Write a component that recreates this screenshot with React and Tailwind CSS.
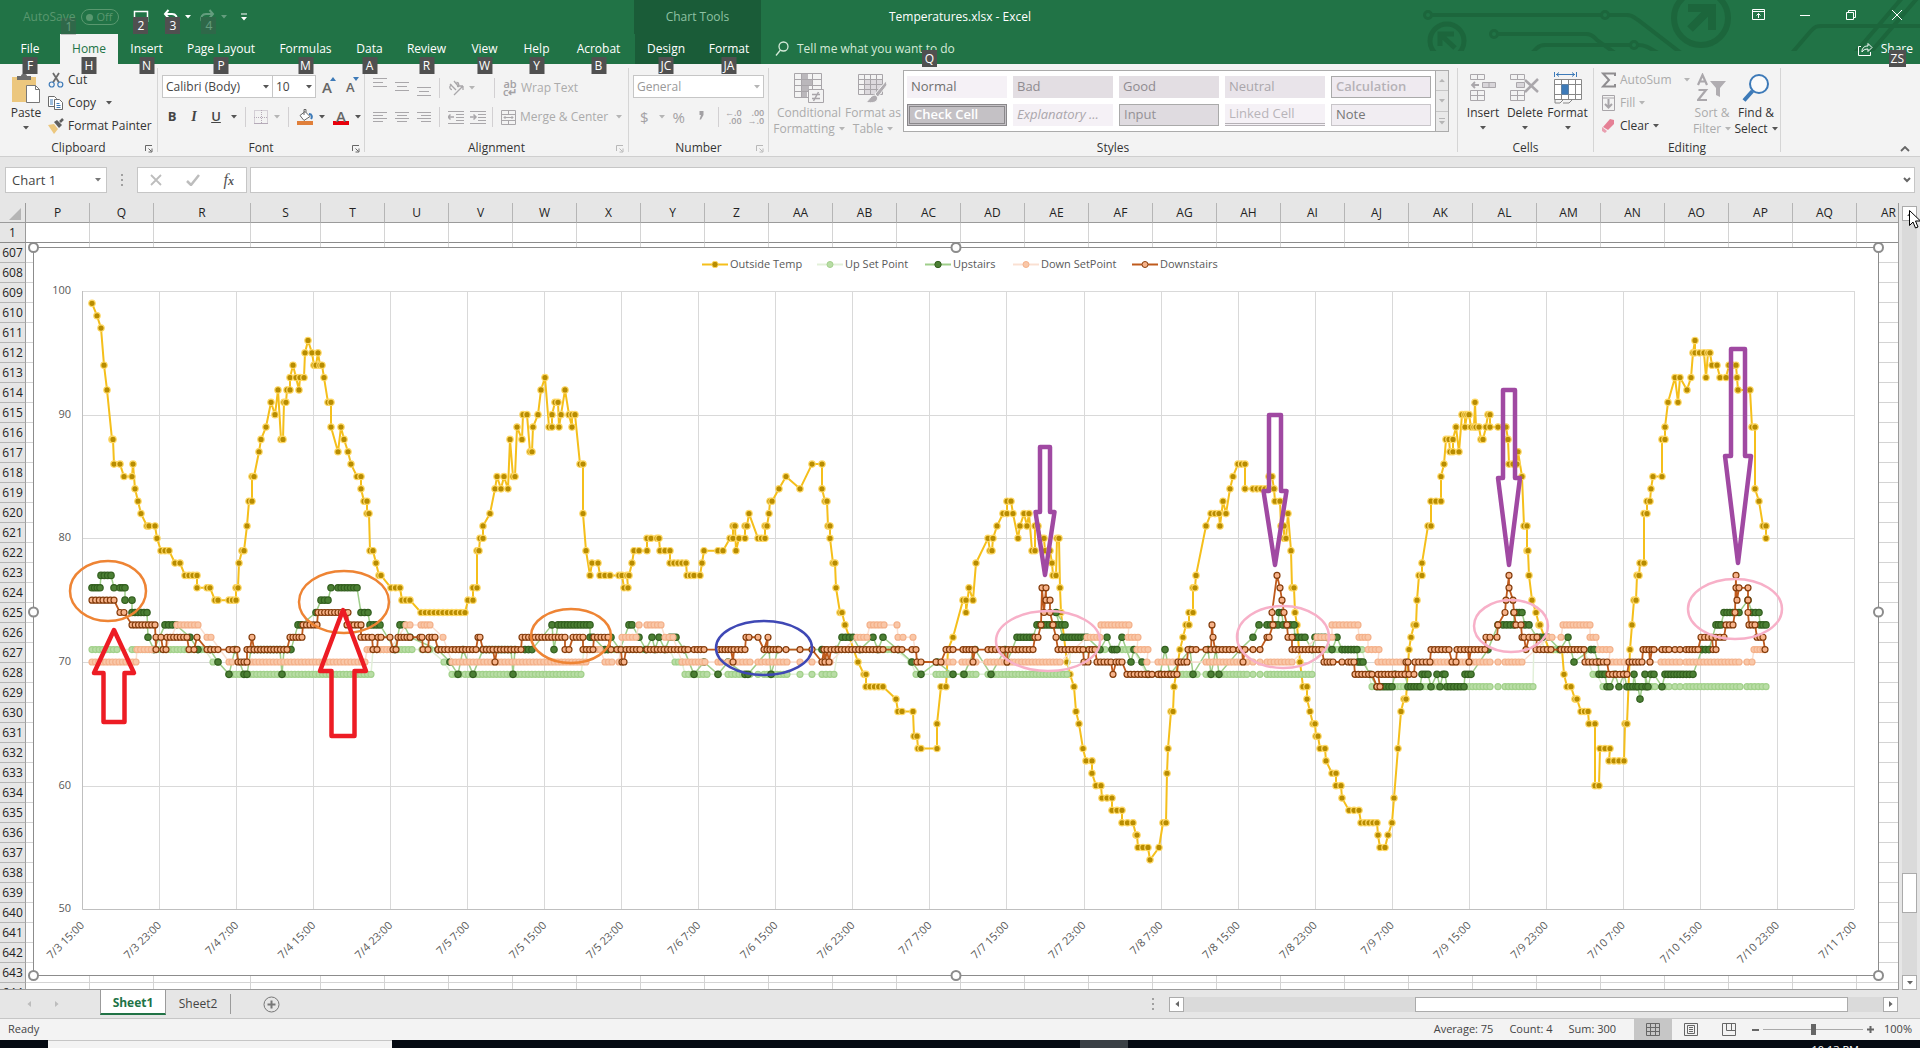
import React, { useState } from 'react';
import clsx from 'clsx';

/* ---------- data ---------- */

const TABS = [
  { name: 'File', tip: 'F', width: 'w-[60px]' },
  { name: 'Home', tip: 'H', width: 'w-[58px]' },
  { name: 'Insert', tip: 'N', width: 'w-[57px]' },
  { name: 'Page Layout', tip: 'P', width: 'w-[92px]' },
  { name: 'Formulas', tip: 'M', width: 'w-[77px]' },
  { name: 'Data', tip: 'A', width: 'w-[51px]' },
  { name: 'Review', tip: 'R', width: 'w-[63px]' },
  { name: 'View', tip: 'W', width: 'w-[53px]' },
  { name: 'Help', tip: 'Y', width: 'w-[51px]' },
  { name: 'Acrobat', tip: 'B', width: 'w-[73px]' },
];

const CHART_TABS = [
  { name: 'Design', tip: 'JC', width: 'w-[62px]' },
  { name: 'Format', tip: 'JA', width: 'w-[64px]' },
];

const CELL_STYLES = [
  { name: 'Normal', look: 'bg-[#f5f1f6] text-[#6f6f6f]' },
  { name: 'Bad', look: 'bg-[#e3dee3] text-[#8f8b90]' },
  { name: 'Good', look: 'bg-[#e3dee3] text-[#8f8b90]' },
  { name: 'Neutral', look: 'bg-[#e9e4ea] text-[#aaa6ab]' },
  { name: 'Calculation', look: 'bg-[#efeaf0] text-[#b5b1b6] font-semibold border border-[#aaa]' },
  { name: 'Check Cell', look: 'bg-[#c4c1c5] text-white font-semibold border-3 border-double border-[#8a888b]' },
  { name: 'Explanatory ...', look: 'bg-[#f5f1f6] text-[#aaa6ab] italic' },
  { name: 'Input', look: 'bg-[#dfdbe0] text-[#949195] border border-[#aaa]' },
  { name: 'Linked Cell', look: 'bg-[#f5f1f6] text-[#b8b4b9] border-b-3 border-double border-[#b5b1b6]' },
  { name: 'Note', look: 'bg-[#f1edf2] text-[#777] border border-[#c8c5c9]' },
];

const COLUMNS = 'P Q R S T U V W X Y Z AA AB AC AD AE AF AG AH AI AJ AK AL AM AN AO AP AQ AR'.split(' ');
const ROWS = [1, ...Array.from({ length: 38 }, (_, i) => 607 + i)];

// Readings are written "temp@x" or "temp@x1-x2" for a run of equal readings.
const SERIES = [
  {
    name: 'Outside Temp', line: '#f5bf1b', fill: '#b88c00', ring: '#ffd966', r: 3.2, gap: 4.5, width: 2,
    data: '99@92 98@97 97@101 94@104 92@107 88@112-113 86@114 86@120 85@124 85@132 86@133 84@135 83@138 82@141 81@147-149 81@155 80@157 79@161-169 78@175-180 77@185-197 76@197 76@207-210 75@215-218 75@229-236 76@236-238 78@239 79@242-244 81@247 83@249-252 85@252-254 87@259 88@261 89@266 91@271 90@275 92@278 88@281-283 91@284-286 92@287-290 93@290 94@293 93@296 92@299 93@300-304 95@305 96@308 95@312 94@314-316 95@318 94@320-322 93@324 91@328-331 89@331 87@338 89@341 88@344 87@348 86@351 85@357-361 84@361 83@364-367 82@367-369 79@370-373 78@376 77@379-381 76@391-400 75@402-410 74@421-465 75@468-473 76@473-477 79@477-479 80@480-483 81@483 82@490 84@495 85@497 84@501 85@504 84@508 88@510 85@513-515 89@517 88@522 90@523-527 87@530-532 89@533 90@538 92@541 93@545 89@549-552 90@552 91@555-558 89@559 90@561 92@565 90@569 89@572 90@572-575 86@580-583 82@583 79@586 77@590 78@592-598 77@600-610 77@619-622 76@624-628 77@627-629 78@632 79@634-639 79@647 80@647-651 80@657-659 79@660-670 78@670-686 77@687-694 77@700 78@702 79@704 79@718-723 80@730-733 81@733-735 79@736 80@739-745 81@745-747 82@749 80@758-765 81@765-767 82@769 83@770-772 84@779 85@786 84@800 86@812 86@822 84@822 83@825-827 81@828-830 80@830 78@833-835 76@836 74@840-842 73@845 70@858 69@864-866 68@866-883 67@896 66@898-902 66@913 64@914-917 63@918-921 63@937 65@937 68@941-946 71@948 72@953 75@963-966 74@966 76@969 75@973 78@976 80@988 79@990-992 80@993 81@997 82@1003-1007 83@1007-1011 82@1013 80@1018 81@1020 82@1024 81@1027 82@1029 79@1032-1035 81@1035-1038 80@1041-1044 79@1045-1050 78@1052 77@1053-1056 80@1057-1059 76@1060 74@1061 70@1067 69@1070 68@1074 66@1076 65@1079 63@1083 62@1086-1092 61@1092 60@1096-1101 59@1102-1112 58@1112-1122 57@1122-1133 56@1136-1137 55@1138-1148 54@1150 55@1159 57@1163-1166 61@1167 63@1168 66@1171-1173 68@1174 71@1180 72@1183 73@1186-1189 74@1189-1193 76@1193-1195 77@1196 81@1206 82@1211-1219 81@1220 83@1223 82@1226 84@1230 85@1233 86@1238-1245 84@1245 84@1253-1269 85@1269-1272 84@1274 83@1275-1280 81@1281-1284 80@1284-1286 82@1288 79@1291 76@1292-1294 74@1295 73@1297 70@1300 68@1303-1307 67@1307 66@1310 65@1313-1315 64@1316-1318 63@1320-1325 62@1326 61@1332-1336 60@1336-1341 59@1342 58@1349-1359 57@1361-1377 56@1378 55@1380-1385 56@1388 57@1392 59@1394 63@1398 66@1401 67@1404-1406 71@1409 72@1411 73@1414-1416 75@1417 77@1419-1422 78@1422 81@1428-1431 83@1431-1441 85@1441 86@1444 88@1446-1449 87@1450-1453 88@1453 89@1456 87@1459 90@1462-1465 89@1465 90@1467-1469 89@1471-1474 91@1475 89@1476-1479 88@1481-1483 89@1486 90@1488-1490 89@1490 89@1498 89@1506 88@1508 86@1509-1517 87@1518 85@1522 81@1524-1527 79@1527-1528 77@1529 75@1532 74@1536 73@1539-1540 71@1549-1562 69@1564 68@1567-1571 67@1575-1577 66@1581-1588 65@1589-1595 60@1595-1599 63@1600-1610 62@1609-1624 65@1625-1627 71@1630 73@1632 75@1634-1636 77@1637-1639 78@1640-1644 82@1644-1647 83@1647-1650 84@1651 85@1653 85@1662 88@1662-1665 89@1665 91@1668 93@1675 91@1678 93@1680 92@1687 93@1691 95@1693 96@1695 95@1695-1704 93@1706 95@1708-1710 94@1712-1717 93@1720-1726 94@1729-1736 93@1737 92@1738 92@1750 89@1752-1755 84@1755 83@1759 81@1763-1766 80@1766',
  },
  {
    name: 'Up Set Point', line: '#e2f0d9', fill: '#b9dda6', ring: '#a2d18b', r: 3, gap: 3.5, width: 1.5,
    data: '71@92-117 71@132-205 70@213-218 69@229-371 71@373-412 71@422-430 70@444 69@452-460 69@465-581 71@584-670 70@675-682 69@685-707 69@718 69@728-750 69@758 69@764-787 69@800 69@812 69@822-834 71@838-895 70@911 69@916 69@936-953 69@963-976 69@988-1067 71@1071-1105 71@1122-1133 69@1147 69@1158-1197 69@1206-1247 69@1253 69@1260 69@1267-1312 71@1314-1362 68@1372 68@1384-1407 68@1420-1490 68@1498 68@1505-1533 72@1534-1540 71@1545-1584 69@1593-1597 68@1603 68@1627-1655 68@1662-1669 68@1675-1680 68@1686-1740 68@1747-1766',
  },
  {
    name: 'Upstairs', line: '#9fce8a', fill: '#4b7f34', ring: '#335f1f', r: 3.2, gap: 3.2, width: 1.5,
    data: '76@92-100 77@101-111 76@114 76@120-125 75@125 75@132 74@132-147 72@148 71@154 73@165-176 72@190 71@198 71@210 70@218 69@229 71@235 69@244-247 71@251-280 69@282 71@284-291 73@298-301 74@316 75@321-328 76@331 76@338-357 74@361-368 73@370-380 71@395 73@400-404 72@410 71@438 70@450 69@458 71@463 69@473 71@483-511 69@513 71@515 71@525-532 73@552 71@554 73@558-590 72@590-593 71@605-608 72@611 71@620 73@629-632 72@639 71@646 72@652 71@655 72@659 71@665 72@670-676 71@684 69@694 70@704 69@718 70@728 69@745-748 71@769 69@771 71@778 71@822 71@836 72@842-853 71@860 72@873 71@878 72@883 71@898 70@912 69@921 70@937 69@953 69@964 71@975 69@991 71@1005 70@1007 72@1017-1033 73@1037-1065 74@1056 72@1063-1087 71@1100 72@1107 71@1112-1117 72@1122 70@1131 71@1134 70@1142 69@1148 69@1160 71@1165 69@1170 71@1190 69@1193 71@1208 69@1211 71@1216 69@1219 71@1240 72@1253 73@1259 73@1267-1278 74@1279-1282 73@1283-1294 72@1295-1305 71@1312 72@1315-1325 71@1332 72@1337 71@1342-1357 70@1358-1363 69@1370 68@1377-1392 69@1395 69@1405 68@1408-1420 69@1422-1428 68@1431 69@1437 68@1440 69@1443-1445 68@1447-1464 69@1465-1471 71@1488 73@1498 73@1503-1514 74@1514-1522 73@1525-1529 72@1537-1548 71@1560 72@1568 70@1574 71@1591-1594 70@1598 69@1599-1605 68@1607-1610 69@1615 68@1619 69@1624 68@1627-1633 69@1634 68@1636-1638 67@1640 68@1642-1646 69@1645 68@1648 69@1651-1654 68@1662 69@1665-1680 69@1683-1693 71@1702-1709 73@1716-1721 74@1724-1739 75@1748 74@1752-1759 73@1760-1766',
  },
  {
    name: 'Down SetPoint', line: '#fae0d2', fill: '#f9c7a8', ring: '#f4b18a', r: 3, gap: 3.5, width: 1.5,
    data: '70@92-136 71@137-155 71@165 73@177-198 72@207-211 70@229-232 70@245-365 71@367-390 73@406-410 73@421-430 72@443 70@452-586 71@588-600 70@605-612 70@619 72@622-636 73@639 73@647-661 72@665-673 70@682-705 70@718-721 70@728-750 70@758-787 70@800 70@812 70@822-830 72@857-867 73@870-884 73@897 72@898-903 72@913 70@917 70@941-953 70@962-976 70@987-1060 72@1087-1100 73@1101-1129 72@1128-1138 71@1137-1148 70@1147 70@1158-1180 70@1206-1247 70@1253 70@1260 70@1267-1292 72@1317-1332 73@1332-1358 72@1359-1368 71@1368-1379 70@1378-1404 70@1430-1490 70@1498 70@1505-1522 72@1549-1552 72@1561 73@1563-1590 72@1590-1596 71@1599-1610 70@1609-1628 70@1650 70@1661-1680 70@1686-1739 70@1747-1752 71@1754-1763',
  },
  {
    name: 'Downstairs', line: '#bf5a1c', fill: '#f7b38a', ring: '#843c0c', r: 3, gap: 3.4, width: 1.8,
    data: '75@92-114 74@120-124 73@132-155 71@156 72@156-161 71@163-166 72@167-187 71@189-194 72@197 71@207-218 71@229-237 70@238-247 71@247-250 72@252 71@254-287 72@290-302 73@303-317 74@318-348 73@347-361 72@361-372 71@373-377 72@378-381 72@390 71@393-396 72@398-410 72@420-422 71@423-428 72@429-435 71@438-448 71@452-476 72@478-480 71@483-493 70@495 71@497-521 72@522-565 71@565-569 72@573-583 71@583-593 72@594-608 71@611 71@617-621 70@622-624 71@626-640 71@647-688 71@694-704 71@719-731 70@733 71@734-745 72@746-749 72@758 71@764 72@768 71@767-779 71@786 71@800 71@812 70@822 71@824 70@825 71@827 70@829 71@831-883 71@894-902 71@912-916 70@917-921 70@936-941 71@946-953 71@963-972 70@973 71@975 71@988-1003 70@1007 71@1008-1033 72@1035-1038 73@1041 76@1042 74@1044 76@1046 75@1046 75@1050 74@1050 73@1053 72@1056 71@1058-1083 70@1084-1088 71@1089-1095 70@1097-1111 69@1113 70@1116-1122 69@1127-1152 69@1158-1177 70@1178-1187 71@1188-1196 71@1206-1211 73@1212 72@1213 71@1215-1233 71@1239-1242 70@1243 71@1245 71@1253 71@1260 72@1267-1269 73@1273 74@1272 77@1277 76@1280 75@1282 74@1284 73@1287 72@1288-1292 71@1292-1322 70@1324-1333 70@1342 70@1348-1354 69@1355-1372 68@1377-1380 69@1378-1405 70@1406-1408 69@1409-1414 70@1415-1430 71@1431-1449 70@1452-1456 71@1457-1468 70@1469 71@1471-1485 72@1486-1490 72@1497 73@1498 74@1505 75@1506 77@1509 76@1509 75@1513 74@1514 73@1516-1521 72@1522-1524 71@1526 72@1529-1537 71@1536-1551 71@1561-1584 70@1585-1607 69@1609-1627 70@1629-1642 71@1643-1649 70@1650 71@1652-1654 71@1662-1669 71@1675-1680 71@1686-1698 72@1701-1712 71@1713-1716 72@1716-1724 73@1726-1733 74@1735 77@1736 76@1736 75@1737 76@1739 76@1748 75@1748 74@1748 73@1749-1755 72@1757-1763 71@1765',
  },
];

const X_LABELS = [
  '7/3 15:00', '7/3 23:00', '7/4 7:00', '7/4 15:00', '7/4 23:00', '7/5 7:00', '7/5 15:00', '7/5 23:00',
  '7/6 7:00', '7/6 15:00', '7/6 23:00', '7/7 7:00', '7/7 15:00', '7/7 23:00', '7/8 7:00', '7/8 15:00',
  '7/8 23:00', '7/9 7:00', '7/9 15:00', '7/9 23:00', '7/10 7:00', '7/10 15:00', '7/10 23:00', '7/11 7:00',
];

const ELLIPSES = [
  [108, 591, 38, 30, '#ee8434'],
  [344, 602, 45, 31, '#ee8434'],
  [571, 636, 40, 27, '#ee8434'],
  [764, 648, 48, 27, '#3f48b5'],
  [1048, 641, 52, 30, '#f7b0c8'],
  [1283, 637, 46, 31, '#f7b0c8'],
  [1511, 626, 37, 26, '#f7b0c8'],
  [1735, 609, 47, 30, '#f7b0c8'],
];

// tip x, tip y, head base y, head half width, stem half width, stem end y
const ARROWS = [
  [114, 630, 673, 20, 10.5, 722, '#ed1c24'],
  [343, 610, 671, 23, 11.5, 736, '#ed1c24'],
  [1045, 575, 512, 9.5, 5, 447, '#a049a2'],
  [1275, 565, 491, 11.5, 6, 415, '#a049a2'],
  [1509, 565, 478, 11, 6, 390, '#a049a2'],
  [1738, 563, 456, 13, 7, 349, '#a049a2'],
];

const LEGEND_X = [702, 817, 925, 1013, 1132];

const yOf = (t) => 291 + (100 - t) * 12.366;

const readPoints = ({ data, gap }) =>
  data.split(' ').flatMap((run) => {
    const [t, range] = run.split('@');
    const [from, to = from] = range.split('-').map(Number);
    const steps = Math.max(to > from ? 1 : 0, Math.round((to - from) / gap));
    return Array.from({ length: steps + 1 }, (_, i) => [
      steps ? from + ((to - from) * i) / steps : from,
      yOf(Number(t)),
    ]);
  });

/* ---------- small parts ---------- */

const KeyTip = ({ children, className }) => (
  <span className={clsx('absolute z-10 h-[17px] min-w-[15px] bg-[#505050] px-0.5 text-center text-xs leading-[17px] text-white', className)}>
    {children}
  </span>
);

const Caret = ({ className = 'text-[#555]' }) => (
  <svg viewBox="0 0 6 4" className={clsx('h-1 w-1.5 shrink-0', className)}>
    <path d="M0 0h6L3 3.6z" fill="currentColor" />
  </svg>
);

const Divider = ({ className }) => <span className={clsx('h-5 w-px shrink-0 bg-[#d2d0d2]', className)} />;

const Launcher = ({ label, muted }) => (
  <button aria-label={label} className={clsx('absolute top-[5px] right-1', muted ? 'text-[#b8b8b8]' : 'text-[#666]')}>
    <svg viewBox="0 0 8 8" className="block size-2" fill="none" stroke="currentColor">
      <path d="M.5 6V.5H7M3.5 3.5l3 3M7 3.5V7H3.5" />
    </svg>
  </button>
);

const Group = ({ title, className, launcher, muted, children }) => (
  <section className={clsx('relative my-1 flex flex-col border-r border-[#d5d5d5]', className)}>
    <div className="h-[72px] shrink-0">{children}</div>
    <div className="relative shrink-0 text-center text-xs leading-4 text-[#333]">
      {title}
      {launcher && <Launcher label={title + ' settings'} muted={muted} />}
    </div>
  </section>
);

const Lines = ({ widths, y = 0, step = 3, align = 'left' }) => (
  <svg viewBox="0 0 14 20" className="block h-5 w-3.5" stroke="#a9a7aa" fill="none">
    {widths.map((w, i) => {
      const x = align === 'left' ? 0 : align === 'right' ? 14 - w : (14 - w) / 2;
      return <path key={i} d={`M${x} ${y + 0.5 + i * step}h${w}`} />;
    })}
  </svg>
);

const IndentIcon = ({ flip }) => (
  <svg viewBox="0 0 16 14" className="h-3.5 w-4" stroke="#a9a7aa" fill="none">
    <path d="M0 1.5h16M8 4.500h8M8 7.500h8M8 10.500h8M0 13.500h16" />
    <path d={flip ? 'M0 7h6M3.5 4.5L6 7 3.5 9.500' : 'M6 7H0M2.5 4.5L0 7l2.5 2.5'} strokeWidth="1.5" />
  </svg>
);

const BigButton = ({ icon, lines, muted, arrowBelow, className }) => (
  <button className={clsx('flex shrink-0 flex-col items-center text-xs leading-4', muted ? 'text-[#ababab]' : 'text-[#333]', className)}>
    <span className="mt-[3px] flex h-[34px] items-center">{icon}</span>
    {lines.map((l, i) => (
      <span key={l} className="flex items-center gap-1 whitespace-nowrap">
        {l}
        {i === 1 && <Caret className={muted ? 'text-[#b5b5b5]' : 'text-[#555]'} />}
      </span>
    ))}
    {arrowBelow && <span className="flex h-3.5 items-center"><Caret /></span>}
  </button>
);

/* ---------- title bar and tabs ---------- */

const Circuit = () => (
  <svg viewBox="0 0 500 51" className="absolute top-0 right-0 h-[51px] w-[500px]" fill="none" stroke="#1c663c" strokeWidth="4">
    <circle cx="8" cy="15" r="3.5" strokeWidth="3" />
    <path d="M12 15h169M189 15h18c5 0 8 3 11 5l43 33" />
    <circle cx="185" cy="15" r="3.5" strokeWidth="3" />
    <circle cx="27" cy="41" r="17" strokeWidth="5" />
    <path d="M35 48L21 35M20 46V34h14" strokeWidth="5" />
    <circle cx="74" cy="34" r="3.5" strokeWidth="3" />
    <path d="M78 34h88c6 0 8 3 11 6l18 13M112 53l5-5c3-3 5-3 8-3h85M218 45c7 0 10 2 20 8" />
    <circle cx="214" cy="45" r="3.5" strokeWidth="3" />
    <circle cx="281" cy="18" r="27" strokeWidth="6" />
    <path d="M270 29l21-21M268 8h24v22" strokeWidth="8" />
    <path d="M372 53l18-21c5-6 7-6 12-6h98M435 53l47-55M450 53l50-58" />
  </svg>
);

const TitleBar = () => (
  <div className="relative flex h-[34px] items-center text-xs text-white">
    <div className="flex w-[634px] shrink-0 items-center">
      <div className="relative ml-[23px] text-[#59986f]">AutoSave
        <KeyTip className="-right-px -bottom-[10px] opacity-30">1</KeyTip>
      </div>
      <label className="relative ml-1.5 flex h-4 w-[38px] items-center justify-end rounded-full border border-[#59986f] pr-1.5 text-[11px] text-[#59986f]">
        <span className="absolute left-1 size-[7px] rounded-full bg-[#59986f]" />
        Off
        <input type="checkbox" aria-label="AutoSave" className="absolute inset-0 opacity-0" />
      </label>
      <button aria-label="Save" className="relative ml-3.5 h-4 w-4">
        <svg viewBox="0 0 16 16" className="size-4" fill="none" stroke="white" strokeWidth="1.5">
          <path d="M1.5 13V2.500h13V13M1.5 9.500h13" />
        </svg>
        <KeyTip className="top-2 left-0">2</KeyTip>
      </button>
      <button aria-label="Undo" className="relative ml-3.5 flex items-center gap-1.5">
        <svg viewBox="0 0 16 16" className="size-4" fill="none" stroke="white" strokeWidth="2">
          <path d="M5.5 1L2 5l3.5 4M2 5h7c4 0 5.500 3 4.500 7" />
        </svg>
        <Caret className="text-white" />
        <KeyTip className="top-2 left-0.5">3</KeyTip>
      </button>
      <button aria-label="Redo" className="relative ml-2 flex items-center gap-1.5 opacity-30">
        <svg viewBox="0 0 16 16" className="size-4" fill="none" stroke="white" strokeWidth="2">
          <path d="M10.5 1L14 5l-3.5 4M14 5H7C3 5 1.5 8 2.5 12" />
        </svg>
        <Caret className="text-white" />
        <KeyTip className="top-2 left-0.5">4</KeyTip>
      </button>
      <button aria-label="Customize Quick Access Toolbar" className="ml-3.5">
        <svg viewBox="0 0 6 8" className="h-2 w-1.5"><path d="M0 .5h6v1H0zM0 4h6L3 7.500z" fill="white" /></svg>
      </button>
    </div>
    <div className="flex h-full w-[127px] items-center justify-center bg-[#1a5c38] text-[#8fc2a3]">Chart Tools</div>
    <h1 className="pointer-events-none absolute inset-x-0 text-center">Temperatures.xlsx - Excel</h1>
    <div className="ml-auto flex items-center gap-[34px] pr-[17px] pb-1">
      <button aria-label="Ribbon Display Options">
        <svg viewBox="0 0 13 12" className="h-3 w-[13px]" fill="none" stroke="white"><path d="M.5.5h12v10H.5zM.5 2.500h12M6.500 9V4.500M4.500 6.500l2-2 2 2" /></svg>
      </button>
      <button aria-label="Minimize">
        <svg viewBox="0 0 12 12" className="size-3" stroke="white"><path d="M1 6.500h10" /></svg>
      </button>
      <button aria-label="Restore">
        <svg viewBox="0 0 12 12" className="size-3" fill="none" stroke="white"><path d="M1.5 3.500h7v7h-7zM3.500 3.500v-2h7v7h-2" /></svg>
      </button>
      <button aria-label="Close">
        <svg viewBox="0 0 12 12" className="size-3" stroke="white"><path d="M1 1l10 10M11 1L1 11" /></svg>
      </button>
    </div>
  </div>
);

const Tab = ({ tab, active, onSelect }) => (
  <button
    onClick={() => onSelect(tab.name)}
    className={clsx('relative shrink-0 whitespace-nowrap', tab.width, active ? 'bg-[#f3f3f3] text-[#217346]' : 'text-white')}
  >
    {tab.name}
    <KeyTip className="top-[23px] left-1/2 -translate-x-1/2">{tab.tip}</KeyTip>
  </button>
);

const TabStrip = () => {
  const [active, setActive] = useState('Home');
  return (
    <nav className="relative flex h-[30px] text-xs">
      {TABS.map((t) => <Tab key={t.name} tab={t} active={t.name === active} onSelect={setActive} />)}
      <div className="flex bg-[#1a5c38]">
        {CHART_TABS.map((t) => <Tab key={t.name} tab={t} active={t.name === active} onSelect={setActive} />)}
      </div>
      <button className="relative ml-3.5 flex items-center gap-2 text-[#d5ead9]">
        <svg viewBox="0 0 14 16" className="h-4 w-3.5" fill="none" stroke="#d5ead9" strokeWidth="1.3">
          <circle cx="8.5" cy="5.5" r="4.5" /><path d="M5.5 9L1 14.500" />
        </svg>
        Tell me what you want to do
        <KeyTip className="top-4 right-[18px]">Q</KeyTip>
      </button>
      <button className="relative mr-[7px] ml-auto flex items-center gap-2 text-white">
        <svg viewBox="0 0 15 14" className="h-3.5 w-[15px]" fill="none" stroke="white">
          <path d="M3 4.500H.5v9h12V10M4 10c0-4 2-6 6-6V1.500L14 5.500 10 9.500V7C7 7 5 8 4 10z" />
        </svg>
        Share
        <KeyTip className="top-4 right-[7px]">ZS</KeyTip>
      </button>
    </nav>
  );
};

/* ---------- ribbon ---------- */

const ClipboardGroup = () => (
  <Group title="Clipboard" launcher className="w-[158px] shrink-0">
    <div className="flex">
      <BigButton
        className="ml-2 w-9"
        lines={['Paste']}
        arrowBelow
        icon={
          <svg viewBox="0 0 30 32" className="h-8 w-[30px]">
            <path d="M1 5h24v25H1z" fill="#ecc77e" />
            <path d="M6 8V4h4c0-3 6-3 6 0h4v4z" fill="#6c6c6c" />
            <path d="M15.5 13.500h9l4 4v13h-13z" fill="white" stroke="#777" />
            <path d="M24.5 13.500v4h4" fill="none" stroke="#777" />
          </svg>
        }
      />
      <div className="ml-1 flex flex-col text-xs text-[#333]">
        <button className="flex h-[23px] items-center gap-1">
          <svg viewBox="0 0 16 16" className="size-4" fill="none">
            <path d="M5 1l6 9.500M11 1L5 10.500" stroke="#6b6b6b" strokeWidth="1.8" />
            <circle cx="3.7" cy="12.5" r="2.5" stroke="#3d7ab8" strokeWidth="1.2" /><circle cx="12.3" cy="12.5" r="2.5" stroke="#3d7ab8" strokeWidth="1.2" />
          </svg>
          Cut
        </button>
        <button className="flex h-[23px] items-center gap-1">
          <svg viewBox="0 0 16 16" className="size-4" fill="white" stroke="#6b6b6b">
            <path d="M.5 1.500h6l2 2v8h-8z" /><path d="M6.5 4.500h5l3 3v7h-8z" />
            <path d="M2 5h3M2 7h3M2 9h3M8.5 8.500h3M8.500 10.500h4M8.500 12.500h4" stroke="#3d7ab8" />
          </svg>
          Copy <span className="ml-1.5"><Caret /></span>
        </button>
        <button className="flex h-[23px] items-center gap-1 whitespace-nowrap">
          <svg viewBox="0 0 16 16" className="size-4">
            <path d="M0 7l6-1 4 5-4 5z" fill="#ecc77e" /><path d="M6 4l3-2 5 5-3 3z" fill="#5f5f5f" /><path d="M12 4l3-3" stroke="#5f5f5f" strokeWidth="2.5" />
          </svg>
          Format Painter
        </button>
      </div>
    </div>
  </Group>
);

const Combo = ({ label, value, className, muted }) => (
  <label className={clsx('relative block', className)}>
    <select aria-label={label} className={clsx('block h-[23px] w-full appearance-none border border-[#c6c6c6] bg-white pl-[3px] text-xs', muted ? 'text-[#999]' : 'text-[#444]')}>
      <option>{value}</option>
    </select>
    <span className="pointer-events-none absolute top-[10px] right-1 flex"><Caret className={muted ? 'text-[#b5b5b5]' : 'text-[#555]'} /></span>
  </label>
);

const FontGroup = () => (
  <Group title="Font" launcher className="w-[207px] shrink-0">
    <div className="flex items-center pt-[7px] pl-1">
      <Combo label="Font" value="Calibri (Body)" className="w-[111px]" />
      <Combo label="Font size" value="10" className="-ml-px w-11" />
      <button aria-label="Increase font size" className="relative ml-1.5 text-[15px] leading-5 font-semibold text-[#666]">A
        <svg viewBox="0 0 6 4" className="absolute top-0 -right-1 h-1 w-1.5"><path d="M0 4h6L3 0z" fill="#3d7ab8" /></svg>
      </button>
      <button aria-label="Decrease font size" className="relative ml-3.5 text-[13px] leading-5 font-semibold text-[#666]">A
        <svg viewBox="0 0 6 4" className="absolute top-0 -right-1 h-1 w-1.5"><path d="M0 0h6L3 4z" fill="#3d7ab8" /></svg>
      </button>
    </div>
    <div className="mt-2 flex h-[22px] items-center pl-[5px] text-[13px] text-[#444]">
      <button className="w-[18px] text-center font-bold">B</button>
      <button className="ml-1 w-[18px] text-center font-['Liberation_Serif',serif] text-sm font-bold italic">I</button>
      <button className="ml-1 w-[18px] text-center font-semibold underline">U</button>
      <span className="ml-1.5 flex"><Caret /></span>
      <Divider className="ml-2" />
      <button aria-label="Borders" className="ml-2">
        <svg viewBox="0 0 14 14" className="size-3.5" fill="none" stroke="#b5aab8"><path d="M.5.5h13v13H.5zM7.500 0v14M0 7.500h14" strokeDasharray="1 1" /><path d="M0 13.500h14" /></svg>
      </button>
      <span className="ml-1.5 flex"><Caret className="text-[#b5b5b5]" /></span>
      <Divider className="ml-2" />
      <button aria-label="Fill color" className="ml-2">
        <svg viewBox="0 0 16 16" className="size-4" fill="none"><path d="M3 6.500l5-4 5 5-6 4z" fill="white" stroke="#666" /><path d="M7 6V.5h2v3" stroke="#666" /><path d="M12 5c3 0 3.500 3 2 5" stroke="#3d7ab8" strokeWidth="2" /><path d="M0 12h16v4H0z" fill="#e07f3a" /></svg>
      </button>
      <span className="ml-1.5 flex"><Caret /></span>
      <button aria-label="Font color" className="ml-2 flex h-4 w-4 justify-center border-b-4 border-[#e8000b] text-[15px] leading-[14px] font-semibold text-[#666]">A</button>
      <span className="ml-1.5 flex"><Caret /></span>
    </div>
  </Group>
);

const AlignmentGroup = () => (
  <Group title="Alignment" launcher muted className="w-[264px] shrink-0">
    <div className="flex h-[37px] items-center pt-0.5 pl-2 text-xs text-[#ababab]">
      <button aria-label="Top align"><Lines widths={[14, 10, 14]} step={4} /></button>
      <button aria-label="Middle align" className="ml-2"><Lines widths={[14, 10, 14]} y={4} step={4} align="center" /></button>
      <button aria-label="Bottom align" className="ml-2"><Lines widths={[14, 10, 14]} y={9} step={4} align="center" /></button>
      <Divider className="ml-2" />
      <button aria-label="Orientation" className="ml-2">
        <svg viewBox="0 0 17 16" className="h-4 w-[17px]" fill="none" stroke="#a9a7aa" strokeWidth="1.3"><path d="M6 15l9-9M15 6h-4M15 6v4M2 4l6 6M4 9.500a2.200 2.200 0 1 1 0-4.400M6 1l5 6M9 6.500a2 2 0 1 0-.5-4" /></svg>
      </button>
      <span className="ml-1 flex"><Caret className="text-[#b5b5b5]" /></span>
      <Divider className="ml-[19px]" />
      <button className="ml-2 flex items-center gap-1 whitespace-nowrap">
        <span className="w-3.5 text-[11px] leading-[8px] font-semibold text-[#a3a1a4]">ab<br />c↵</span>Wrap Text
      </button>
    </div>
    <div className="flex h-6 items-center pl-2 text-xs text-[#ababab]">
      <button aria-label="Align left"><Lines widths={[14, 10, 14, 10]} y={5} /></button>
      <button aria-label="Center" className="ml-2"><Lines widths={[14, 10, 14, 10]} y={5} align="center" /></button>
      <button aria-label="Align right" className="ml-2"><Lines widths={[14, 10, 14, 10]} y={5} align="right" /></button>
      <Divider className="ml-2" />
      <button aria-label="Decrease indent" className="ml-2"><IndentIcon /></button>
      <button aria-label="Increase indent" className="ml-1.5"><IndentIcon flip /></button>
      <Divider className="ml-1.5" />
      <button className="ml-2 flex items-center gap-1 whitespace-nowrap">
        <svg viewBox="0 0 15 15" className="size-[15px]" fill="none" stroke="#a9a7aa"><path d="M.5.5h14v14H.5zM.5 4.500h14M.5 10.500h14M7.500 0v4M7.500 11v4M3 7.500h9M4.500 6L3 7.500 4.500 9M10.500 6L12 7.500 10.500 9" /></svg>
        Merge &amp; Center
      </button>
      <span className="ml-2 flex"><Caret className="text-[#b5b5b5]" /></span>
    </div>
  </Group>
);

const NumberGroup = () => (
  <Group title="Number" launcher muted className="w-[140px] shrink-0">
    <div className="px-1 pt-[7px]"><Combo label="Number format" value="General" muted /></div>
    <div className="mt-2 flex h-[22px] items-center pl-[11px] text-[15px] text-[#a3a1a4]">
      <button>$</button>
      <span className="ml-2.5 flex"><Caret className="text-[#b5b5b5]" /></span>
      <button className="ml-2">%</button>
      <button aria-label="Comma style" className="ml-3.5">
        <svg viewBox="0 0 5 9" className="mb-1 h-[9px] w-[5px]"><path d="M.5 0h4v4L2 8.500H.5L2 4H.5z" fill="#a3a1a4" /></svg>
      </button>
      <Divider className="ml-3.5" />
      <button aria-label="Increase decimal" className="ml-1.5 text-right text-[9px] leading-[8px] font-semibold">←.0<br />.00</button>
      <button aria-label="Decrease decimal" className="ml-1.5 text-right text-[9px] leading-[8px] font-semibold">.00<br />→.0</button>
    </div>
  </Group>
);

const StylesGroup = () => (
  <Group title="Styles" className="min-w-0 max-w-[689px] flex-1">
    <div className="flex items-start">
      <BigButton
        muted
        className="ml-[3px] w-[74px]"
        lines={['Conditional', 'Formatting']}
        icon={
          <svg viewBox="0 0 30 32" className="h-8 w-[30px]" stroke="#a8a5a9" fill="none">
            <path d="M8 1h6v6H8zM8 7h10v6H8zM8 13h7v6H8zM8 19h5v6H8z" fill="#bab7bb" stroke="none" />
            <path d="M.5 1.500h27v24H.5zM.5 7.500h27M.5 13.500h27M.5 19.500h27M7.500 1v24M18.500 1v24" />
            <path d="M14.5 17.500h15v13h-15z" fill="#f3f3f3" /><path d="M18 22.500h8M18 26.500h8M24.500 20l-5 9" strokeWidth="1.5" />
          </svg>
        }
      />
      <BigButton
        muted
        className="w-[54px]"
        lines={['Format as', 'Table']}
        icon={
          <svg viewBox="0 0 30 32" className="h-8 w-[30px]" stroke="#a8a5a9" fill="none">
            <path d="M7 7h18v15H7z" fill="#dcd9dd" stroke="none" />
            <path d="M.5 2.500h24v20H.5zM.5 7.500h24M.5 12.500h24M.5 17.500h24M6.500 2v20M12.500 2v20M18.500 2v20" />
            <path d="M28 9L17 22l3 3 9-12z" fill="#b0adb1" stroke="#f3f3f3" /><path d="M8 30c3-1 4-6 8-7 4 0 5 5 1 7-3 1-6 1-9 0z" fill="#b0adb1" stroke="#f3f3f3" />
          </svg>
        }
      />
      <div className="mt-0.5 mr-2 ml-[3px] flex h-[62px] min-w-0 flex-1 border border-[#ababab] bg-white">
        <div className="grid min-w-0 flex-1 grid-cols-5 gap-1.5 py-[5px] pr-1 pl-[3px]">
          {CELL_STYLES.map((s) => (
            <button key={s.name} className={clsx('flex h-[22px] items-center overflow-hidden px-1 text-[13px] whitespace-nowrap', s.look)}>{s.name}</button>
          ))}
        </div>
        <div className="flex w-[13px] flex-col border-l border-[#ababab] bg-[#e9e9e9]">
          <button aria-label="Previous styles" className="flex flex-1 rotate-180 items-center justify-center"><Caret className="text-[#b5b5b5]" /></button>
          <button aria-label="Next styles" className="flex flex-1 items-center justify-center border-y border-[#c6c6c6]"><Caret className="text-[#b5b5b5]" /></button>
          <button aria-label="More styles" className="flex flex-1 flex-col items-center justify-center gap-0.5"><span className="h-px w-1.5 bg-[#b5b5b5]" /><Caret className="text-[#b5b5b5]" /></button>
        </div>
      </div>
    </div>
  </Group>
);

const CellsGroup = () => (
  <Group title="Cells" className="w-[136px] shrink-0">
    <div className="flex pl-1">
      <BigButton
        className="w-[42px]" lines={['Insert']} arrowBelow
        icon={
          <svg viewBox="0 0 27 30" className="h-[30px] w-[27px]" stroke="#aaa7ab" fill="none">
            <path d="M.5 1.500h14v5H.5zM7.500 1.500v5M.5 17.500h14v10H.5zM.5 22.500h14M7.500 17.500v10" /><path d="M12.5 9.500h13v5h-13zM19 9.500v5" fill="#d8d5d9" /><path d="M9 12H1.500M5 9l-3 3 3 3" strokeWidth="1.8" />
          </svg>
        }
      />
      <BigButton
        className="w-[42px]" lines={['Delete']} arrowBelow
        icon={
          <svg viewBox="0 0 30 30" className="h-[30px] w-[30px]" stroke="#aaa7ab" fill="none">
            <path d="M.5 1.500h14v5H.5zM7.500 1.500v5M.5 17.500h14v10H.5zM.5 22.500h14M7.500 17.500v10" /><path d="M6.500 9.500h8v5h-8z" fill="#d8d5d9" /><path d="M15 7l13 12M28 6L15 19" strokeWidth="2.5" />
          </svg>
        }
      />
      <BigButton
        className="w-[43px]" lines={['Format']} arrowBelow
        icon={
          <svg viewBox="0 0 28 32" className="h-8 w-7" stroke="#888" fill="none">
            <path d="M.5 7.500h27v20H.5z" fill="white" /><path d="M.5 12.500h27M.5 22.500h27M7.500 7.500v20M14.500 7.500v20M21.500 7.500v20M1 27v4h5l3-3M9 31h6l3-3" />
            <path d="M7.5 12.500h7v10h-7z" fill="#3d7ab8" stroke="none" /><path d="M.5 0v5M22.500 0v5M2 2.500h19M5 .5L2.500 2.500 5 4.500M18 .5l2.500 2L18 4.500" stroke="#3d7ab8" />
          </svg>
        }
      />
    </div>
  </Group>
);

const EditingGroup = () => (
  <Group title="Editing" className="w-[187px] shrink-0">
    <div className="flex pl-[7px]">
      <div className="flex w-[89px] flex-col text-xs text-[#ababab]">
        <button className="flex h-[23px] items-center gap-1">
          <svg viewBox="0 0 15 16" className="h-4 w-[15px]" fill="none" stroke="#8f8d90" strokeWidth="2"><path d="M14 4V1.500H2L8 8l-6 6.500h12V12" /></svg>
          AutoSum <span className="ml-auto"><Caret className="text-[#b5b5b5]" /></span>
        </button>
        <button className="flex h-[23px] items-center gap-1">
          <svg viewBox="0 0 15 16" className="h-4 w-[15px]" fill="none" stroke="#a8a5a9"><path d="M1.5.5h12v15h-12zM1.500 3h12" /><path d="M7.5 4v8M4 9l3.500 3.500L11 9" strokeWidth="2" /></svg>
          Fill <Caret className="text-[#b5b5b5]" />
        </button>
        <button className="flex h-[23px] items-center gap-1 text-[#333]">
          <svg viewBox="0 0 15 16" className="h-4 w-[15px]"><path d="M9 1l4 1v4l-6 6-5-3z" fill="#e58095" /><path d="M1 9l5 4-2 2-3-2z" fill="#e9a0b0" /></svg>
          Clear <Caret />
        </button>
      </div>
      <BigButton
        muted className="w-11" lines={['Sort &', 'Filter']}
        icon={
          <svg viewBox="0 0 30 30" className="h-[30px] w-[30px]" fill="none" stroke="#aaa7ab" strokeWidth="2.2">
            <path d="M1 12L5.500 2 10 12M3 8.500h5.500M1.500 17H9l-8 10h9" /><path d="M13 8h16l-6 7v9l-4-2v-7z" fill="#b0adb1" stroke="none" />
          </svg>
        }
      />
      <BigButton
        className="w-11" lines={['Find &', 'Select']}
        icon={
          <svg viewBox="0 0 28 30" className="h-[30px] w-7" fill="none" stroke="#3d7ab8"><circle cx="17" cy="11" r="9" fill="#fafafa" strokeWidth="2" /><path d="M10.5 18L2 27.500" strokeWidth="4" /></svg>
        }
      />
    </div>
  </Group>
);

const Ribbon = () => (
  <div className="relative flex h-[93px] border-b border-[#cfcfcf] bg-[#f3f3f3]">
    <ClipboardGroup />
    <FontGroup />
    <AlignmentGroup />
    <NumberGroup />
    <StylesGroup />
    <CellsGroup />
    <EditingGroup />
    <button aria-label="Collapse the Ribbon" className="mt-auto mr-2.5 mb-1 ml-auto">
      <svg viewBox="0 0 10 6" className="h-1.5 w-2.5" fill="none" stroke="#666" strokeWidth="1.8"><path d="M1 5l4-4 4 4" /></svg>
    </button>
  </div>
);

/* ---------- formula bar ---------- */

const FormulaBar = () => (
  <div className="flex h-[46px] items-start px-[5px] pt-2.5">
    <label className="relative w-[102px]">
      <input aria-label="Name Box" defaultValue="Chart 1" className="h-[26px] w-full border border-[#c6c6c6] bg-white pl-1.5 text-[13px] text-[#444]" />
      <span className="absolute top-[11px] right-1.5 flex"><Caret className="text-[#777]" /></span>
    </label>
    <div className="flex h-[26px] w-[30px] items-center justify-center">
      <svg viewBox="0 0 2 12" className="h-3 w-0.5" fill="#a0a0a0"><path d="M0 0h2v2H0zM0 5h2v2H0zM0 10h2v2H0z" /></svg>
    </div>
    <div className="flex h-[26px] w-[110px] items-center justify-around border border-[#c6c6c6] bg-white">
      <button aria-label="Cancel">
        <svg viewBox="0 0 12 12" className="size-3" stroke="#bdbdbd" strokeWidth="1.8"><path d="M1 1l10 10M11 1L1 11" /></svg>
      </button>
      <button aria-label="Enter">
        <svg viewBox="0 0 14 12" className="h-3 w-3.5" fill="none" stroke="#bdbdbd" strokeWidth="2.5"><path d="M1 7l4 4 8-10" /></svg>
      </button>
      <button aria-label="Insert Function" className="font-['Liberation_Serif',serif] text-base leading-4 text-[#555] italic">f<span className="text-xs font-bold">x</span></button>
    </div>
    <div className="relative ml-[3px] flex-1">
      <input aria-label="Formula" className="h-[26px] w-full border border-[#c6c6c6] bg-white px-2 text-[13px]" />
      <svg viewBox="0 0 8 6" className="absolute top-2.5 right-1 h-1.5 w-2" fill="none" stroke="#666" strokeWidth="2"><path d="M1 1l3 3 3-3" /></svg>
    </div>
  </div>
);

/* ---------- sheet ---------- */

const columnWidth = (c) => (c === 'R' ? 'w-[97px]' : c === 'S' ? 'w-[70px]' : 'w-16');

const Grid = () => (
  <table className="w-px table-fixed border-separate border-spacing-0 text-xs text-[#222]">
    <colgroup>
      <col className="w-[26px]" />
      {COLUMNS.map((c) => <col key={c} className={columnWidth(c)} />)}
    </colgroup>
    <thead>
      <tr className="h-5 bg-[#e6e6e6]">
        <th aria-label="Select all" className="border-r border-b border-[#9b9b9b] p-0">
          <svg viewBox="0 0 12 12" className="mt-0.5 ml-[9px] size-3"><path d="M12 0v12H0z" fill="#b5b5b5" /></svg>
        </th>
        {COLUMNS.map((c) => (
          <th key={c} className="border-r border-b border-r-[#b5b5b5] border-b-[#9b9b9b] p-0 text-center leading-[19px] font-normal">{c}</th>
        ))}
      </tr>
    </thead>
    <tbody>
      {ROWS.map((r) => (
        <tr key={r} className="h-5">
          <th className={clsx('border-r border-b border-r-[#9b9b9b] bg-[#e6e6e6] p-0 pt-px text-center leading-[18px] font-normal', r === 1 ? 'border-b-[#8c8c8c]' : 'border-b-[#b5b5b5]')}>{r}</th>
          {COLUMNS.map((c) => (
            <td key={c} className={clsx('border-r border-b border-r-[#d4d4d4] p-0', r === 1 ? 'border-b-[#8c8c8c]' : 'border-b-[#d4d4d4]')} />
          ))}
        </tr>
      ))}
    </tbody>
  </table>
);

const Series = ({ series }) => {
  const points = readPoints(series);
  return (
    <g>
      <polyline points={points.map((p) => p.join(',')).join(' ')} fill="none" stroke={series.line} strokeWidth={series.width} strokeLinejoin="round" />
      {points.map(([x, y], i) => (
        <circle key={i} cx={x} cy={y} r={series.r} fill={series.fill} stroke={series.ring} strokeWidth="1.2" />
      ))}
    </g>
  );
};

const Arrow = ({ arrow }) => {
  const [x, tip, base, head, stem, end, color] = arrow;
  const d = `M${x} ${tip}L${x + head} ${base}H${x + stem}V${end}H${x - stem}V${base}H${x - head}Z`;
  return <path d={d} fill="none" stroke={color} strokeWidth="4.5" strokeLinejoin="round" />;
};

const TemperatureChart = () => (
  <svg viewBox="34 248 1844 727" className="block size-full text-[11px]" role="img" aria-label="Temperatures chart">
    <g stroke="#d9d9d9">
      {X_LABELS.map((l, i) => <path key={l} d={`M${82.5 + Math.round(i * 77.04)} 291V909`} />)}
      {[100, 90, 80, 70, 60].map((t) => <path key={t} d={`M82 ${Math.round(yOf(t)) + 0.5}H1854`} />)}
    </g>
    <path d="M82.5 291V909.500H1854" fill="none" stroke="#bfbfbf" />
    <g fill="#595959">
      {[100, 90, 80, 70, 60, 50].map((t) => <text key={t} x="71" y={yOf(t) + 3} textAnchor="end">{t}</text>)}
      {X_LABELS.map((l, i) => {
        const x = 85 + i * 77.04;
        return <text key={l} x={x} y="926" textAnchor="end" transform={`rotate(-45 ${x} 926)`}>{l}</text>;
      })}
    </g>
    {SERIES.map((s) => <Series key={s.name} series={s} />)}
    {SERIES.map((s, i) => (
      <g key={s.name}>
        <path d={`M${LEGEND_X[i]} 264.500h26`} stroke={s.line} strokeWidth="2" />
        <circle cx={LEGEND_X[i] + 13} cy="264.5" r={s.r} fill={s.fill} stroke={s.ring} />
        <text x={LEGEND_X[i] + 28} y="268" fill="#595959">{s.name}</text>
      </g>
    ))}
    {ELLIPSES.map(([cx, cy, rx, ry, color]) => (
      <ellipse key={cx} cx={cx} cy={cy} rx={rx} ry={ry} fill="none" stroke={color} strokeWidth="2.5" />
    ))}
    {ARROWS.map((a) => <Arrow key={a[0]} arrow={a} />)}
  </svg>
);

const Handle = ({ className }) => (
  <span className={clsx('absolute size-[11px] rounded-full border-2 border-[#8c8c8c] bg-white', className)} />
);

const ChartObject = () => (
  <div className="absolute top-[44px] right-[19px] bottom-[13px] left-[33px] border border-[#8c8c8c] bg-white">
    <TemperatureChart />
    <Handle className="-top-1.5 -left-1.5" />
    <Handle className="-top-1.5 left-1/2 -translate-x-1/2" />
    <Handle className="-top-1.5 -right-1.5" />
    <Handle className="top-1/2 -left-1.5 -translate-y-1/2" />
    <Handle className="top-1/2 -right-1.5 -translate-y-1/2" />
    <Handle className="-bottom-1.5 -left-1.5" />
    <Handle className="-bottom-1.5 left-1/2 -translate-x-1/2" />
    <Handle className="-right-1.5 -bottom-1.5" />
  </div>
);

const ScrollButton = ({ label, turn }) => (
  <button aria-label={label} className="flex size-[15px] shrink-0 items-center justify-center border border-[#ababab] bg-white">
    <span className={turn}><Caret className="text-[#666]" /></span>
  </button>
);

const Sheet = () => (
  <div className="flex min-h-0 flex-1">
    <div className="relative min-w-0 flex-1 overflow-hidden border-r border-b border-[#9b9b9b] bg-white">
      <Grid />
      <ChartObject />
    </div>
    <div className="relative flex w-[21px] flex-col items-center pt-[3px]">
      <ScrollButton label="Scroll up" turn="rotate-180" />
      <div className="relative w-[15px] flex-1 bg-[#dadada]">
        <div className="absolute inset-x-0 bottom-[62px] h-10 border border-[#ababab] bg-white" />
      </div>
      <ScrollButton label="Scroll down" turn="" />
      <svg viewBox="0 0 12 19" className="absolute top-[7px] left-[10px] h-[19px] w-3"><path d="M.5.5v15l3.500-3.500 2.500 6 2.500-1-2.500-6h5z" fill="white" stroke="black" /></svg>
    </div>
  </div>
);

/* ---------- bottom bars ---------- */

const SheetTabs = () => (
  <div className="flex h-7 items-start text-xs text-[#444]">
    <div className="flex h-7 w-[100px] items-center gap-[22px] pl-[26px]">
      <span className="rotate-90"><Caret className="text-[#bdbdbd]" /></span>
      <span className="-rotate-90"><Caret className="text-[#bdbdbd]" /></span>
    </div>
    <button className="h-[25px] w-[66px] border-x border-b-2 border-x-[#9b9b9b] border-b-[#217346] bg-white pt-0.5 font-bold text-[#217346]">Sheet1</button>
    <button className="mt-1 h-5 w-[65px] border-r border-[#9b9b9b]">Sheet2</button>
    <button aria-label="New sheet" className="mt-1.5 ml-8">
      <svg viewBox="0 0 17 17" className="size-[17px]" fill="none" stroke="#777"><circle cx="8.5" cy="8.5" r="7.5" /><path d="M4.5 8.500h8M8.500 4.500v8" strokeWidth="2" /></svg>
    </button>
    <div className="ml-auto flex h-7 w-2/5 items-center pr-[22px]">
      <svg viewBox="0 0 2 12" className="mr-[15px] h-3 w-0.5" fill="#a0a0a0"><path d="M0 0h2v2H0zM0 5h2v2H0zM0 10h2v2H0z" /></svg>
      <ScrollButton label="Scroll left" turn="rotate-90" />
      <div className="flex h-[15px] flex-1 bg-[#dadada]">
        <div className="ml-[33%] w-[62%] border border-[#ababab] bg-white" />
      </div>
      <ScrollButton label="Scroll right" turn="-rotate-90" />
    </div>
  </div>
);

const StatusBar = () => (
  <footer className="flex h-[22px] items-center border-t border-[#c6c6c6] bg-[#f3f3f3] text-[11px] text-[#444]">
    <span className="pl-2">Ready</span>
    <div className="ml-auto flex gap-4 pr-[18px]">
      <span>Average: 75</span><span>Count: 4</span><span>Sum: 300</span>
    </div>
    <button aria-label="Normal view" className="flex h-full w-[38px] items-center justify-center bg-[#c6c6c6]">
      <svg viewBox="0 0 14 13" className="h-[13px] w-3.5" fill="none" stroke="#666"><path d="M.5.5h13v12H.5zM.5 4.500h13M.5 8.500h13M4.500.5v12M9.500.5v12" /></svg>
    </button>
    <button aria-label="Page layout view" className="flex w-[38px] justify-center">
      <svg viewBox="0 0 14 13" className="h-[13px] w-3.5" fill="none" stroke="#666"><path d="M.5.5h13v12H.5zM3.500 2.500h7v8h-7zM5 4.500h4M5 6.500h4M5 8.500h4" /></svg>
    </button>
    <button aria-label="Page break view" className="flex w-[38px] justify-center">
      <svg viewBox="0 0 14 13" className="h-[13px] w-3.5" fill="none" stroke="#666"><path d="M.5.5h13v12H.5zM4.500.5v7h9M9.500.5v7" /></svg>
    </button>
    <button aria-label="Zoom out" className="ml-1 h-0.5 w-[7px] bg-[#666]" />
    <input
      type="range"
      aria-label="Zoom"
      defaultValue="50"
      className="mx-1 h-3 w-[100px] appearance-none bg-[linear-gradient(#aaa,#aaa)] bg-[length:100%_1px] bg-center bg-no-repeat [&::-webkit-slider-thumb]:h-[11px] [&::-webkit-slider-thumb]:w-[5px] [&::-webkit-slider-thumb]:appearance-none [&::-webkit-slider-thumb]:bg-[#666]"
    />
    <button aria-label="Zoom in">
      <svg viewBox="0 0 7 7" className="size-[7px]" fill="none" stroke="#666" strokeWidth="2"><path d="M3.5 0v7M0 3.500h7" /></svg>
    </button>
    <span className="w-[46px] pr-2 text-right">100%</span>
  </footer>
);

const TaskBar = () => (
  <div className="flex h-2 overflow-hidden bg-[#050a12] text-white">
    <div className="ml-12 w-[344px] border-t border-[#c6c6c6] bg-[#f3f3f3]" />
    <div className="ml-[688px] w-12 bg-[#3a4045]" />
    <time className="mr-[61px] ml-auto pt-[3px] text-[11px] leading-[14px]">10:13 PM</time>
  </div>
);

export default function App() {
  return (
    <div className="flex h-screen flex-col overflow-hidden bg-[#e6e6e6] font-['Open_Sans',sans-serif]">
      <header className="relative shrink-0 bg-[#217346]">
        <Circuit />
        <TitleBar />
        <TabStrip />
      </header>
      <Ribbon />
      <FormulaBar />
      <Sheet />
      <SheetTabs />
      <StatusBar />
      <TaskBar />
    </div>
  );
}
